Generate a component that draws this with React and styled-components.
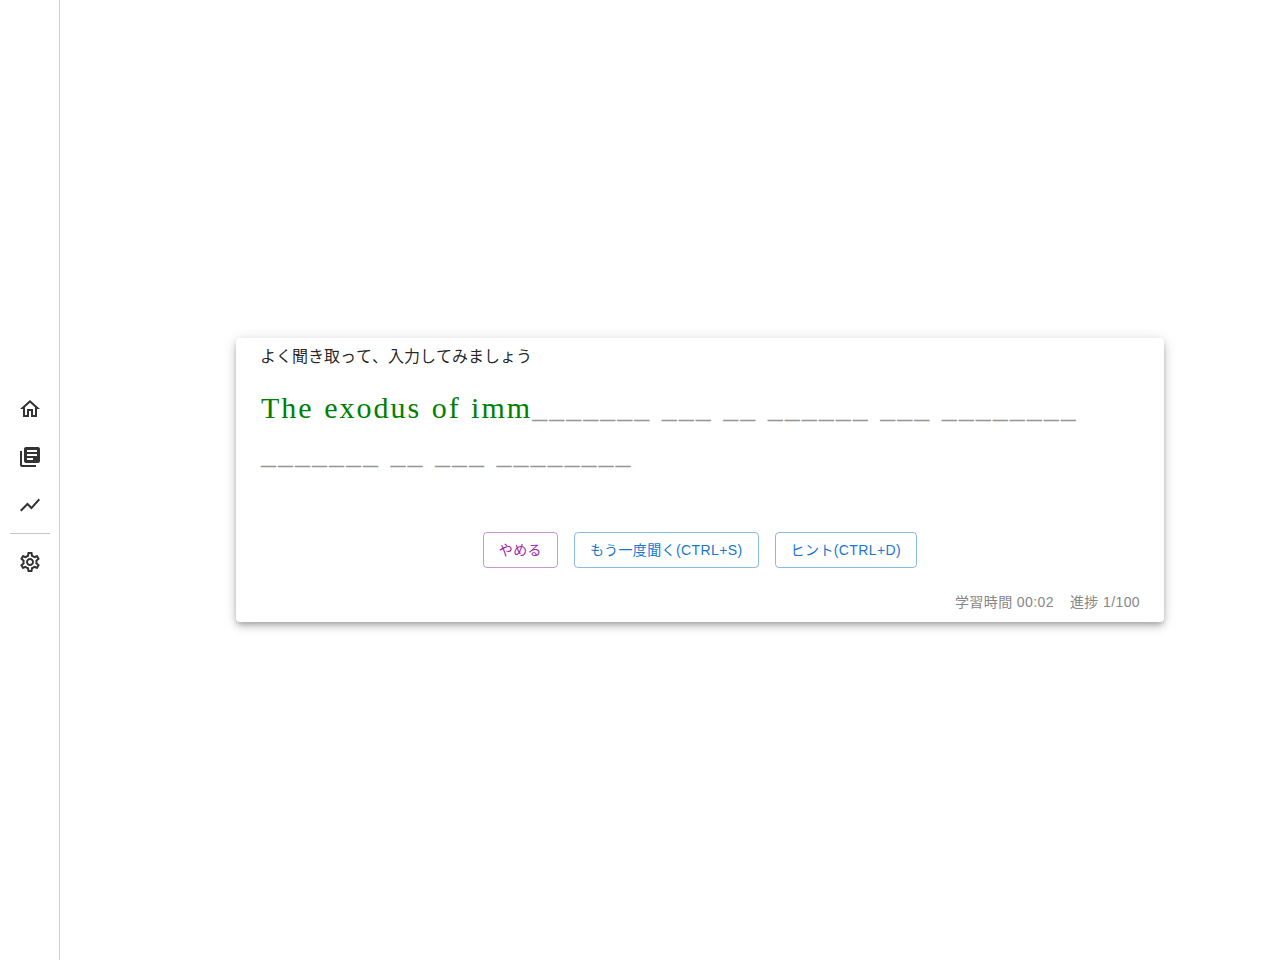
import React from "react";
import styled, { createGlobalStyle } from "styled-components";

const ICONS = {
  home: "m12 5.69 5 4.5V18h-2v-6H9v6H7v-7.81l5-4.5M12 3 2 12h3v8h6v-6h2v6h6v-8h3L12 3z",
  books: "M4 6H2v14c0 1.1.9 2 2 2h14v-2H4V6zm16-4H8c-1.1 0-2 .9-2 2v12c0 1.1.9 2 2 2h12c1.1 0 2-.9 2-2V4c0-1.1-.9-2-2-2zm-1 9H9V9h10v2zm-4 4H9v-2h6v2zm4-8H9V5h10v2z",
  chart: "M3.5 18.49l6-6.01 4 4L22 6.92l-1.41-1.41-7.09 7.97-4-4L2 16.99z",
  settings: "M19.43 12.98c.04-.32.07-.64.07-.98 0-.34-.03-.66-.07-.98l2.11-1.65c.19-.15.24-.42.12-.64l-2-3.46c-.09-.16-.26-.25-.44-.25-.06 0-.12.01-.17.03l-2.49 1c-.52-.4-1.08-.73-1.69-.98l-.38-2.65C14.46 2.18 14.25 2 14 2h-4c-.25 0-.46.18-.49.42l-.38 2.65c-.61.25-1.17.59-1.69.98l-2.49-1c-.06-.02-.12-.03-.18-.03-.17 0-.34.09-.43.25l-2 3.46c-.13.22-.07.49.12.64l2.11 1.65c-.04.32-.07.65-.07.98 0 .33.03.66.07.98l-2.11 1.65c-.19.15-.24.42-.12.64l2 3.46c.09.16.26.25.44.25.06 0 .12-.01.17-.03l2.49-1c.52.4 1.08.73 1.69.98l.38 2.65c.03.24.24.42.49.42h4c.25 0 .46-.18.49-.42l.38-2.65c.61-.25 1.17-.59 1.69-.98l2.49 1c.06.02.12.03.18.03.17 0 .34-.09.43-.25l2-3.46c.12-.22.07-.49-.12-.64l-2.11-1.65zm-1.98-1.71c.04.31.05.52.05.73 0 .21-.02.43-.05.73l-.14 1.13.89.7 1.08.84-.7 1.21-1.27-.51-1.04-.42-.9.68c-.43.32-.84.56-1.25.73l-1.06.43-.16 1.13-.2 1.35h-1.4l-.19-1.35-.16-1.13-1.06-.43c-.43-.18-.83-.41-1.23-.71l-.91-.7-1.06.43-1.27.51-.7-1.21 1.08-.84.89-.7-.14-1.13c-.03-.31-.05-.54-.05-.74s.02-.43.05-.73l.14-1.13-.89-.7-1.08-.84.7-1.21 1.27.51 1.04.42.9-.68c.43-.32.84-.56 1.25-.73l1.06-.43.16-1.13.2-1.35h1.39l.19 1.35.16 1.13 1.06.43c.43.18.83.41 1.23.71l.91.7 1.06-.43 1.27-.51.7 1.21-1.07.85-.89.7.14 1.13zM12 8c-2.21 0-4 1.79-4 4s1.79 4 4 4 4-1.79 4-4-1.79-4-4-4zm0 6c-1.1 0-2-.9-2-2s.9-2 2-2 2 .9 2 2-.9 2-2 2z",
};

const BLANKS = ["_______", "___", "__", "______", "___", "________", "_______", "__", "___", "________"];

function Icon({ name }) {
  return (
    <StyledIcon viewBox="0 0 24 24">
      <path d={ICONS[name]} />
    </StyledIcon>
  );
}

function App() {
  return (
    <StyledPage>
      <GlobalStyle />
      <StyledSide>
        <StyledSideButton><Icon name="home" /></StyledSideButton>
        <StyledSideButton><Icon name="books" /></StyledSideButton>
        <StyledSideButton><Icon name="chart" /></StyledSideButton>
        <StyledDivider />
        <StyledSideButton><Icon name="settings" /></StyledSideButton>
      </StyledSide>
      <StyledMain>
        <StyledCard>
          <StyledLead>よく聞き取って、入力してみましょう</StyledLead>
          <StyledSentence>
            <StyledTyped>The exodus of imm</StyledTyped>
            <StyledBlank>{BLANKS.join(" ")}</StyledBlank>
          </StyledSentence>
          <StyledActions>
            <StyledButton $color="156, 39, 176">やめる</StyledButton>
            <StyledButton $color="25, 118, 210">もう一度聞く(CTRL+S)</StyledButton>
            <StyledButton $color="25, 118, 210">ヒント(CTRL+D)</StyledButton>
          </StyledActions>
          <StyledStatus>
            <span>学習時間 00:02</span>
            <span>進捗 1/100</span>
          </StyledStatus>
        </StyledCard>
      </StyledMain>
    </StyledPage>
  );
}

const GlobalStyle = createGlobalStyle`
  body {
    margin: 0;
    background: #fff;
    font-family: "Liberation Sans", "Noto Sans CJK JP", sans-serif;
    font-kerning: none;
    text-spacing-trim: space-all;
  }
`;

const StyledPage = styled.div`
  display: flex;
  height: 100vh;
`;

const StyledSide = styled.nav`
  box-sizing: border-box;
  width: 60px;
  flex-shrink: 0;
  padding-top: 11px;
  border-right: 1px solid #d0d0d0;
  display: flex;
  flex-direction: column;
  align-items: center;
  justify-content: center;
`;

const StyledSideButton = styled.div`
  width: 48px;
  height: 48px;
  display: flex;
  align-items: center;
  justify-content: center;
`;

const StyledIcon = styled.svg`
  width: 24px;
  height: 24px;
  fill: rgba(0, 0, 0, 0.8);
`;

const StyledDivider = styled.div`
  width: 40px;
  height: 1px;
  margin: 4px 0;
  background: #c8c8c8;
`;

const StyledMain = styled.main`
  flex: 1;
  padding-left: 60px;
  display: flex;
  align-items: center;
  justify-content: center;
`;

const StyledCard = styled.section`
  box-sizing: border-box;
  width: 928px;
  height: 284px;
  padding: 7px 24px 0;
  border-radius: 4px;
  background: #fff;
  box-shadow: 0 3px 5px -1px rgba(0, 0, 0, 0.2), 0 5px 8px 0 rgba(0, 0, 0, 0.14), 0 1px 14px 0 rgba(0, 0, 0, 0.12);
`;

const StyledLead = styled.div`
  font-size: 16px;
  line-height: 24px;
  color: rgba(0, 0, 0, 0.87);
`;

const StyledSentence = styled.div`
  margin-top: 16px;
  padding-left: 1px;
  height: 147px;
  font-family: "Liberation Serif", serif;
  font-size: 30px;
  line-height: 46px;
  letter-spacing: 2px;
  word-spacing: 1px;
`;

const StyledTyped = styled.span`
  color: green;
`;

const StyledBlank = styled.span`
  color: #969696;
`;

const StyledActions = styled.div`
  display: flex;
  justify-content: center;
  gap: 16px;
`;

const StyledButton = styled.button`
  box-sizing: border-box;
  height: 36px;
  padding: 0 15px 2px;
  font-family: inherit;
  font-size: 14px;
  letter-spacing: 0.4px;
  background: transparent;
  border-radius: 4px;
  color: rgb(${(props) => props.$color});
  border: 1px solid rgba(${(props) => props.$color}, 0.5);
`;

const StyledStatus = styled.div`
  margin-top: 24px;
  display: flex;
  justify-content: flex-end;
  gap: 16px;
  font-size: 14px;
  line-height: 20px;
  letter-spacing: 0.4px;
  color: #868686;
`;

export default App;
